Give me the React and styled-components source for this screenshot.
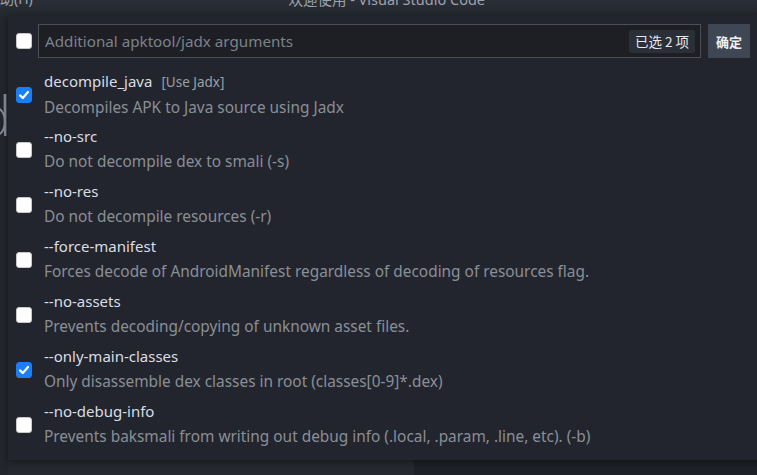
import React from "react";
import styled, { createGlobalStyle } from "styled-components";

const GlobalStyle = createGlobalStyle`
  html, body {
    margin: 0;
    padding: 0;
    background: #1e2127;
    overflow: hidden;
  }
  body {
    font-family: "Noto Sans", "Noto Sans CJK SC", sans-serif;
  }
`;

const Window = styled.div`
  width: 757px;
  height: 475px;
  display: flex;
  flex-direction: column;
  position: relative;
  overflow: hidden;
  background: #1e2127;
`;

const TitleBar = styled.div`
  height: 16px;
  flex: none;
  display: flex;
  align-items: flex-end;
  justify-content: space-between;
  background: linear-gradient(#2a2e37, #252830);
  color: #9da3ad;
  font-size: 14px;
  overflow: hidden;
`;

const MenuText = styled.span`
  line-height: 14px;
  margin-bottom: 10px;
  margin-left: -14px;
`;

const TitleText = styled.span`
  line-height: 14px;
  margin-bottom: 10px;
  margin-right: 272px;
  font-size: 14.5px;
`;

const Body = styled.div`
  flex: 1;
  display: flex;
`;

const Side = styled.div`
  width: 8px;
  flex: none;
  background: #23262e;
  overflow: hidden;
  display: flex;
  flex-direction: column;
`;

const BigLetter = styled.span`
  margin-top: 70px;
  margin-left: -22px;
  font-size: 56px;
  font-weight: 300;
  line-height: 56px;
  color: #8a9099;
  font-family: "Open Sans", sans-serif;
`;

const Editor = styled.div`
  flex: 1;
  display: flex;
  align-items: flex-end;
`;

const EditorLeft = styled.div`
  width: 406px;
  height: 15px;
  background: #262930;
`;

const QuickPick = styled.div`
  position: absolute;
  left: 8px;
  top: 15px;
  width: 760px;
  height: 445px;
  background: #22252d;
  box-shadow: 0 2px 8px rgba(0, 0, 0, 0.45);
  display: flex;
  flex-direction: column;
  padding: 9px 0 0 8px;
  box-sizing: border-box;
`;

const Header = styled.div`
  display: flex;
  align-items: center;
  height: 34px;
`;

const Box = styled.span`
  width: 14px;
  height: 14px;
  flex: none;
  border-radius: 3px;
  border: 1px solid ${(p) => (p.$checked ? "#1a7ef5" : "#c8c8c8")};
  background: ${(p) => (p.$checked ? "#1a7ef5" : "#ffffff")};
  display: flex;
  align-items: center;
  justify-content: center;
`;

const Input = styled.div`
  margin-left: 6px;
  width: 663px;
  height: 34px;
  box-sizing: border-box;
  border: 1px solid #4b4e54;
  background: #1d1f24;
  display: flex;
  align-items: center;
  justify-content: space-between;
  padding: 0 5px 0 6px;
`;

const Placeholder = styled.span`
  color: #7d828b;
  font-size: 15.2px;
`;

const Badge = styled.span`
  background: #2b2f38;
  color: #e6e8ec;
  font-size: 13.5px;
  font-family: "Noto Sans CJK SC", sans-serif;
  padding: 0 6px;
  height: 23px;
  line-height: 23px;
  border-radius: 2px;
`;

const OkButton = styled.button`
  margin-left: 7px;
  width: 42px;
  height: 34px;
  border: none;
  padding: 0;
  background: #404754;
  color: #f0f0f0;
  font-size: 13px;
  font-weight: bold;
  font-family: "Noto Sans CJK SC", sans-serif;
`;

const List = styled.div`
  margin-top: 9px;
  display: flex;
  flex-direction: column;
`;

const Row = styled.div`
  height: 55px;
  display: flex;
  align-items: center;
  gap: 12px;
`;

const Texts = styled.div`
  display: flex;
  flex-direction: column;
`;

const Label = styled.div`
  color: #dadde3;
  font-size: 15px;
  line-height: 25px;
  white-space: nowrap;
`;

const Tag = styled.span`
  color: #9aa0a8;
  font-size: 13.5px;
  margin-left: 9px;
`;

const Desc = styled.div`
  color: #8a8f97;
  font-size: 15.4px;
  line-height: 26px;
  white-space: nowrap;
`;

const Check = () => (
  <svg width="12" height="12" viewBox="0 0 12 12">
    <path
      d="M2 6.4 L4.8 9 L10 3"
      fill="none"
      stroke="#ffffff"
      strokeWidth="2.2"
      strokeLinecap="round"
      strokeLinejoin="round"
    />
  </svg>
);

const options = [
  { label: "decompile_java", tag: "[Use Jadx]", desc: "Decompiles APK to Java source using Jadx", checked: true },
  { label: "--no-src", desc: "Do not decompile dex to smali (-s)" },
  { label: "--no-res", desc: "Do not decompile resources (-r)" },
  { label: "--force-manifest", desc: "Forces decode of AndroidManifest regardless of decoding of resources flag." },
  { label: "--no-assets", desc: "Prevents decoding/copying of unknown asset files." },
  { label: "--only-main-classes", desc: "Only disassemble dex classes in root (classes[0-9]*.dex)", checked: true },
  { label: "--no-debug-info", desc: "Prevents baksmali from writing out debug info (.local, .param, .line, etc). (-b)" },
];

export default function App() {
  return (
    <>
      <GlobalStyle />
      <Window>
        <TitleBar>
          <MenuText>帮助(H)</MenuText>
          <TitleText>欢迎使用 - Visual Studio Code</TitleText>
        </TitleBar>
        <Body>
          <Side>
            <BigLetter>d</BigLetter>
          </Side>
          <Editor>
            <EditorLeft />
          </Editor>
        </Body>
        <QuickPick>
          <Header>
            <Box />
            <Input>
              <Placeholder>Additional apktool/jadx arguments</Placeholder>
              <Badge>已选 2 项</Badge>
            </Input>
            <OkButton>确定</OkButton>
          </Header>
          <List>
            {options.map((o) => (
              <Row key={o.label}>
                <Box $checked={o.checked}>{o.checked && <Check />}</Box>
                <Texts>
                  <Label>
                    {o.label}
                    {o.tag && <Tag>{o.tag}</Tag>}
                  </Label>
                  <Desc>{o.desc}</Desc>
                </Texts>
              </Row>
            ))}
          </List>
        </QuickPick>
      </Window>
    </>
  );
}
